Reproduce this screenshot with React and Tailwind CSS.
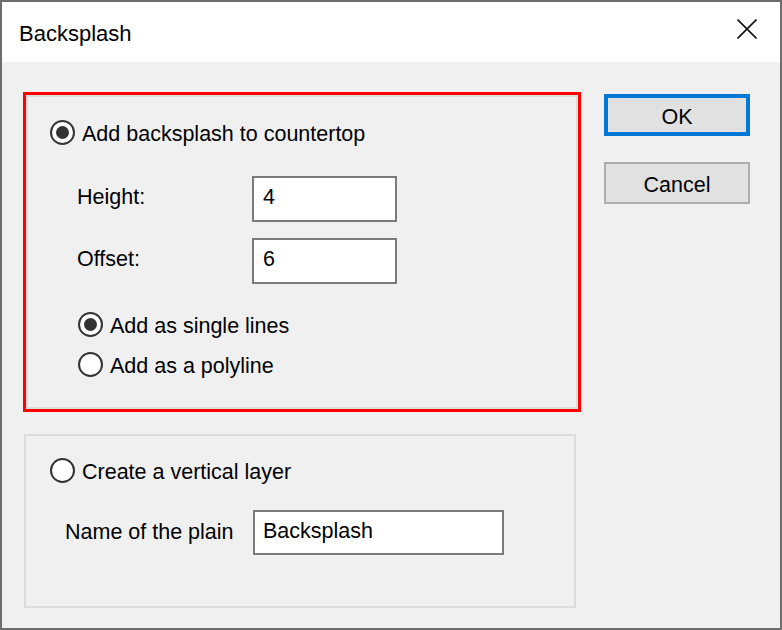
import React from "react";

function Radio({ checked }) {
  return (
    <div className="w-[25px] h-[25px] shrink-0 rounded-full border-2 border-[#333333] bg-white flex items-center justify-center">
      {checked && <div className="w-[13px] h-[13px] rounded-full bg-[#333333]" />}
    </div>
  );
}

function Field({ className, children }) {
  return (
    <div className={"shrink-0 border-2 border-[#7a7a7a] bg-white flex items-center pb-[2px] " + className}>
      {children}
    </div>
  );
}

export default function App() {
  return (
    <div className="w-[782px] h-[630px] border-2 border-[#6d6d6d] bg-[#f0f0f0] flex flex-col text-black font-['Liberation_Sans',Arial,sans-serif] text-[21.5px] leading-none">
      <div className="h-[60px] shrink-0 bg-white flex items-center justify-between pl-[17px] pr-[23px]">
        <span className="text-[22px] pt-[4px]">Backsplash</span>
        <svg width="20" height="20" viewBox="0 0 20 20" className="mb-[6px]">
          <path d="M0.5 0.5 L19.5 19.5 M19.5 0.5 L0.5 19.5" stroke="#111" strokeWidth="1.6" fill="none" />
        </svg>
      </div>
      <div className="flex pl-[21px] pt-[30px]">
        <div className="flex flex-col w-[558px] shrink-0">
          <div className="h-[320px] border-[3px] border-[#ff0000]">
            <div className="h-full border-2 border-[#dcdcdc] pt-[23px] pl-[22px] flex flex-col">
              <div className="flex items-center gap-[7px] h-[25px]">
                <Radio checked />
                <span className="pt-[5px]">Add backsplash to countertop</span>
              </div>
              <div className="flex items-center mt-[31px] ml-[27px]">
                <span className="w-[175px] pb-[2px]">Height:</span>
                <Field className="w-[145px] h-[46px] pl-[9px]">4</Field>
              </div>
              <div className="flex items-center mt-[16px] ml-[27px]">
                <span className="w-[175px] pb-[2px]">Offset:</span>
                <Field className="w-[145px] h-[46px] pl-[9px]">6</Field>
              </div>
              <div className="flex items-center gap-[7px] h-[25px] mt-[28px] ml-[28px]">
                <Radio checked />
                <span className="pt-[5px]">Add as single lines</span>
              </div>
              <div className="flex items-center gap-[7px] h-[25px] mt-[15px] ml-[28px]">
                <Radio />
                <span className="pt-[5px]">Add as a polyline</span>
              </div>
            </div>
          </div>
          <div className="mt-[22px] ml-[1px] w-[552px] h-[174px] border-2 border-[#dcdcdc] pt-[22px] pl-[24px] flex flex-col">
            <div className="flex items-center gap-[7px] h-[25px]">
              <Radio />
              <span className="pt-[5px]">Create a vertical layer</span>
            </div>
            <div className="flex items-center mt-[27px] ml-[15px]">
              <span className="w-[188px] pt-[1px]">Name of the plain</span>
              <Field className="w-[251px] h-[45px] pl-[8px]">Backsplash</Field>
            </div>
          </div>
        </div>
        <div className="ml-[23px] mt-[2px] flex flex-col gap-[26px]">
          <div className="w-[146px] h-[42px] border-4 border-[#0078d7] bg-[#e1e1e1] flex items-center justify-center pt-[5px]">OK</div>
          <div className="w-[146px] h-[42px] border-2 border-[#adadad] bg-[#e1e1e1] flex items-center justify-center pt-[5px]">Cancel</div>
        </div>
      </div>
    </div>
  );
}
